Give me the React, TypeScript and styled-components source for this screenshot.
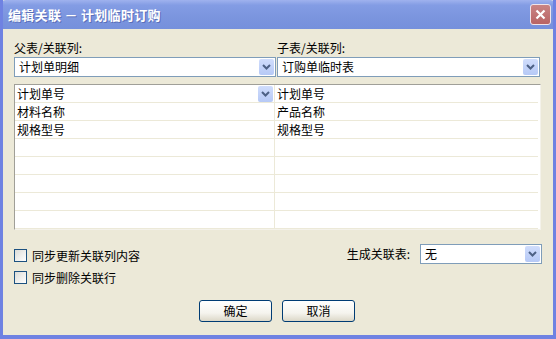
import { Fragment } from 'react';
import styled, { createGlobalStyle } from 'styled-components';

const GlobalStyle = createGlobalStyle`
  html, body {
    margin: 0;
    padding: 0;
    background: #ece9d8;
  }
  body {
    font-family: "Noto Sans CJK SC", "DejaVu Sans", sans-serif;
    font-size: 12px;
    color: #000;
  }
`;

const Window = styled.div`
  width: 556px;
  height: 339px;
  box-sizing: border-box;
  display: flex;
  flex-direction: column;
  background: #ece9d8;
  border: 3px solid #6f82e2;
  border-top: 0;
  border-bottom-width: 4px;
  overflow: hidden;
`;

const TitleBar = styled.div`
  height: 29px;
  margin: 0 -3px;
  padding: 0 5px 0 8px;
  display: flex;
  align-items: center;
  justify-content: space-between;
  background: linear-gradient(to bottom, #9fb2ee 0%, #839ce4 18%, #7b95de 60%, #7590dc 100%);
  border-radius: 6px 6px 0 0;
`;

const Title = styled.span`
  color: #fff;
  font-weight: bold;
  font-size: 13px;
  letter-spacing: 0.3px;
  text-shadow: 1px 1px 0 #5a6fb8;
  white-space: pre;
`;

const CloseButton = styled.div`
  width: 19px;
  height: 19px;
  border: 1px solid #f0e4e8;
  border-radius: 3px;
  background: linear-gradient(to bottom, #c98484, #b96464);
  display: flex;
  align-items: center;
  justify-content: center;
`;

const Body = styled.div`
  flex: 1;
  padding: 11px 11px 0;
  display: flex;
  flex-direction: column;
`;

const Columns = styled.div`
  display: grid;
  grid-template-columns: 262px 263px;
  gap: 1px;
`;

const Field = styled.div`
  display: flex;
  flex-direction: column;
  gap: 2px;
`;

const Label = styled.span`
  line-height: 15px;
  height: 15px;
  color: #000;
`;

const Combo = styled.div<{ $width?: number }>`
  box-sizing: border-box;
  height: 20px;
  width: ${({ $width }) => ($width ? `${$width}px` : 'auto')};
  border: 1px solid #7f9db9;
  background: #fff;
  display: flex;
  align-items: center;
  padding: 1px;
`;

const ComboText = styled.span`
  flex: 1;
  padding-left: 3px;
  line-height: 16px;
`;

const ArrowButton = styled.div`
  width: 15px;
  height: 16px;
  border-radius: 2px;
  background: linear-gradient(to bottom, #d0ddfc, #b6c9f6);
  display: flex;
  align-items: center;
  justify-content: center;
`;

const Grid = styled.div`
  margin-top: 7px;
  border-top: 1px solid #a09f98;
  border-left: 1px solid #a09f98;
  border-right: 1px solid #f4f2ea;
  border-bottom: 1px solid #f4f2ea;
  background: #fff;
  display: grid;
  grid-template-columns: 260px 263px;
  width: 525px;
`;

const Cell = styled.div`
  box-sizing: border-box;
  height: 18px;
  border-bottom: 1px solid #ece9d8;
  border-right: 1px solid #ece9d8;
  display: flex;
  align-items: center;
  padding: 0 1px 0 2px;
  &:nth-child(2n) {
    border-right: 0;
  }
`;

const CellText = styled.span`
  flex: 1;
  line-height: 16px;
`;

const Options = styled.div`
  margin-top: 14px;
  display: flex;
  justify-content: space-between;
`;

const Checks = styled.div`
  padding-top: 1px;
  display: flex;
  flex-direction: column;
  gap: 2px;
`;

const CheckRow = styled.label`
  height: 20px;
  display: flex;
  align-items: center;
  gap: 5px;
`;

const CheckBox = styled.span`
  box-sizing: border-box;
  width: 13px;
  height: 13px;
  border: 1px solid #1c5180;
  background: linear-gradient(135deg, #dcdcd7, #ffffff);
`;

const TableField = styled.div`
  display: flex;
  align-items: flex-start;
  gap: 10px;
`;

const TableLabel = styled.span`
  line-height: 20px;
`;

const Buttons = styled.div`
  margin-top: 13px;
  display: flex;
  justify-content: center;
  gap: 10px;
  padding-right: 2px;
`;

const Button = styled.button`
  box-sizing: border-box;
  width: 73px;
  height: 22px;
  border: 1px solid #003c74;
  border-radius: 3px;
  background: linear-gradient(to bottom, #ffffff 0%, #f5f4ee 60%, #dcd8c8 100%);
  font-family: inherit;
  font-size: 12px;
  line-height: 18px;
  padding: 0;
  color: #000;
`;

const Chevron = () => (
  <svg width="9" height="6" viewBox="0 0 9 6">
    <path d="M1 1 L4.5 4.5 L8 1" fill="none" stroke="#4d6185" strokeWidth="2" />
  </svg>
);

const rows: [string, string][] = [
  ['计划单号', '计划单号'],
  ['材料名称', '产品名称'],
  ['规格型号', '规格型号'],
  ['', ''],
  ['', ''],
  ['', ''],
  ['', ''],
  ['', ''],
];

export default function App() {
  return (
    <>
      <GlobalStyle />
      <Window>
        <TitleBar>
          <Title>编辑关联 － 计划临时订购</Title>
          <CloseButton>
            <svg width="11" height="11" viewBox="0 0 11 11">
              <path d="M1.5 1.5 L9.5 9.5 M9.5 1.5 L1.5 9.5" stroke="#fff" strokeWidth="2.2" />
            </svg>
          </CloseButton>
        </TitleBar>
        <Body>
          <Columns>
            <Field>
              <Label>父表/关联列:</Label>
              <Combo>
                <ComboText>计划单明细</ComboText>
                <ArrowButton>
                  <Chevron />
                </ArrowButton>
              </Combo>
            </Field>
            <Field>
              <Label>子表/关联列:</Label>
              <Combo>
                <ComboText>订购单临时表</ComboText>
                <ArrowButton>
                  <Chevron />
                </ArrowButton>
              </Combo>
            </Field>
          </Columns>

          <Grid>
            {rows.map(([left, right], i) => (
              <Fragment key={i}>
                <Cell>
                  <CellText>{left}</CellText>
                  {i === 0 && (
                    <ArrowButton>
                      <Chevron />
                    </ArrowButton>
                  )}
                </Cell>
                <Cell>
                  <CellText>{right}</CellText>
                </Cell>
              </Fragment>
            ))}
          </Grid>

          <Options>
            <Checks>
              <CheckRow>
                <CheckBox />
                同步更新关联列内容
              </CheckRow>
              <CheckRow>
                <CheckBox />
                同步删除关联行
              </CheckRow>
            </Checks>
            <TableField>
              <TableLabel>生成关联表:</TableLabel>
              <Combo $width={122}>
                <ComboText>无</ComboText>
                <ArrowButton>
                  <Chevron />
                </ArrowButton>
              </Combo>
            </TableField>
          </Options>

          <Buttons>
            <Button>确定</Button>
            <Button>取消</Button>
          </Buttons>
        </Body>
      </Window>
    </>
  );
}
